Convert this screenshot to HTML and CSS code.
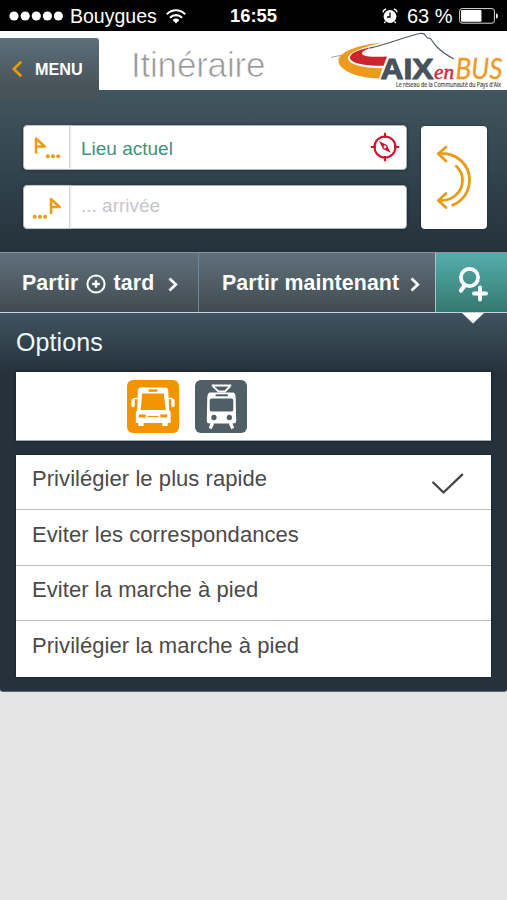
FILE: index.html
```html
<!DOCTYPE html>
<html lang="fr">
<head>
<meta charset="utf-8">
<meta name="viewport" content="width=device-width">
<title>Itinéraire</title>
<link rel="stylesheet" href="styles.css">
</head>
<body>
<div class="status">
  <svg class="signal" width="55" height="10" viewBox="0 0 55 10" fill="#fff"><circle cx="5" cy="5" r="4.6"/><circle cx="16.2" cy="5" r="4.6"/><circle cx="27.3" cy="5" r="4.6"/><circle cx="38.4" cy="5" r="4.6"/><circle cx="49.4" cy="5" r="4.6"/></svg>
  <span class="carrier">Bouygues</span>
  <svg class="wifi" width="20" height="15" viewBox="0 0 20 15"><g fill="none" stroke="#fff" stroke-width="2.2"><path d="M.8 5.2C6-.1 14-.1 19.200 5.200"/><path d="M4 8.700C7.500 5.300 12.500 5.300 16 8.700"/></g><path d="M6.600 11Q10 8.200 13.400 11L10 14.600Z" fill="#fff"/></svg>
  <span class="clock">16:55</span>
  <svg class="alarm" width="16" height="16" viewBox="0 0 16 16"><circle cx="8" cy="8.500" r="6.400" fill="#fff"/><path d="M8 4.500V9H5" fill="none" stroke="#000" stroke-width="1.300"/><path d="M.8 4.300Q1.500 1.700 4 1M15.200 4.300Q14.500 1.700 12 1M3.500 13.500L2.300 15M12.500 13.500L13.700 15" fill="none" stroke="#fff" stroke-width="1.300"/></svg>
  <span class="percent">63 %</span>
  <svg class="battery" width="39" height="16" viewBox="0 0 39 16"><rect x=".6" y=".6" width="34.800" height="14.600" rx="2.500" fill="none" stroke="#ddd" stroke-width="1"/><rect x="2" y="2" width="20.500" height="11.800" rx="1" fill="#fff"/><path d="M37 5.200Q39 5.700 39 8T37 10.800Z" fill="#fff"/></svg>
</div>

<header class="header">
  <div class="menu">
    <svg width="12" height="18" viewBox="0 0 12 18"><path d="M10.300 1.700L2.800 9L10.300 16.300" fill="none" stroke="#ee9908" stroke-width="2.700"/></svg>
    <span>MENU</span>
  </div>
  <h1 class="title">Itinéraire</h1>
  <svg class="logo" width="182" height="59" viewBox="325 31 182 59">
    <path d="M331 57.500Q336 56 342 55.400" fill="none" stroke="#888" stroke-width=".8"/>
    <path d="M383 42.500C360 44.500 340 51 338.500 60C338 70 356 78 379 78.500L382.500 68.300C362 68.300 347 64 348 57.500C350 51 366 46.500 383 42.500Z" fill="#ee9a1f"/>
    <path d="M375 46.500C361 49 349 52.500 350 58.500C352 63.500 366 66 383.500 65.800L387 56.500C376 57.300 363.500 57 362 53.800C361.500 51 367 49 375 46.500Z" fill="#ce242b"/>
    <path d="M370 48.200C389 43.500 408 36 420 33.500Q424 32.700 425.500 35.500L427.500 38L430.500 38.500C433 42 434 44 437 47C442 52 448 56 454 59" fill="none" stroke="#505b62" stroke-width="1.200"/>
    <text class="logo-aix" x="380.500" y="78.600" textLength="53" lengthAdjust="spacingAndGlyphs">AIX</text>
    <text class="logo-en" x="434" y="78.500" textLength="20" lengthAdjust="spacingAndGlyphs">en</text>
    <text class="logo-bus" x="455.500" y="78.500" textLength="47" lengthAdjust="spacingAndGlyphs">BUS</text>
    <text class="logo-tag" x="396" y="87.300" textLength="105" lengthAdjust="spacingAndGlyphs">Le réseau de la Communauté du Pays d'Aix</text>
  </svg>
</header>

<section class="search">
  <div class="fields">
    <div class="field">
      <div class="flag"><svg width="46" height="44" viewBox="0 0 46 44"><path d="M12 26.500V12.500L20.700 20.500H12" fill="none" stroke="#ee9c0c" stroke-width="2.500" stroke-linejoin="round" stroke-linecap="round"/><g fill="#ee9c0c"><circle cx="23.800" cy="30.300" r="2"/><circle cx="29" cy="30.300" r="2"/><circle cx="34.200" cy="30.300" r="2"/></g></svg></div>
      <span class="value">Lieu actuel</span>
      <svg class="compass" width="30" height="30" viewBox="0 0 30 30"><g fill="none" stroke="#d0142c" stroke-width="2.100"><circle cx="15" cy="15" r="10.500"/><path d="M15 .8V6M15 24V29.200M.8 15H6M24 15H29.200"/></g><path d="M9 9L16.900 12.900L20.700 20.700L12.900 16.900Z" fill="#d0142c"/><circle cx="15" cy="15" r="1.400" fill="#fff"/></svg>
    </div>
    <div class="field">
      <div class="flag"><svg width="46" height="44" viewBox="0 0 46 44"><path d="M27 27V13L35.700 21H27" fill="none" stroke="#ee9c0c" stroke-width="2.500" stroke-linejoin="round" stroke-linecap="round"/><g fill="#ee9c0c"><circle cx="10.700" cy="30.700" r="2"/><circle cx="15.900" cy="30.700" r="2"/><circle cx="21.100" cy="30.700" r="2"/></g></svg></div>
      <span class="value empty">... arrivée</span>
    </div>
  </div>
  <div class="swap"><svg width="66" height="103" viewBox="0 0 66 103" fill="none" stroke="#e89b18" stroke-width="2.800" stroke-linecap="round" stroke-linejoin="round"><path d="M25 21L17.300 27.800L25 35M17.500 27.500C35.500 26 48.500 38.500 48.500 54C48.500 65 42.500 74.500 31.800 79.100M25 67.500L17.300 74.500L25 81.500M17.500 74.500C30.500 75.500 41.500 67 41.500 54C41.500 48 39.300 44 35.300 40.300"/></svg></div>
</section>

<nav class="bar">
  <div class="later"><span>Partir</span>
    <svg class="plus" width="20" height="20" viewBox="0 0 20 20" fill="none" stroke="#fff"><circle cx="10" cy="10" r="8.600" stroke-width="2"/><path d="M10 6.200V13.800M6.200 10H13.800" stroke-width="2.400"/></svg>
    <span>tard</span>
    <svg class="chev" width="10" height="15" viewBox="0 0 10 15"><path d="M1.500 1.500L7.800 7.500L1.500 13.500" fill="none" stroke="#fff" stroke-width="2.700"/></svg>
  </div>
  <div class="now"><span>Partir maintenant</span>
    <svg class="chev" width="10" height="15" viewBox="0 0 10 15"><path d="M1.500 1.500L7.800 7.500L1.500 13.500" fill="none" stroke="#fff" stroke-width="2.700"/></svg>
  </div>
  <div class="more"><svg width="70" height="59" viewBox="0 0 70 59" fill="none" stroke="#fff" stroke-linecap="round"><circle cx="33.500" cy="24.500" r="8.600" stroke-width="3.700"/><path d="M29 32L25 37.500" stroke-width="4.200"/><path d="M44 34.500V46.500M38 40.500H50" stroke-width="4"/></svg></div>
</nav>

<section class="options">
  <svg class="pointer" width="22" height="11" viewBox="0 0 22 11"><path d="M0 0H22L11 10.500Z" fill="#fff"/></svg>
  <h2>Options</h2>
  <div class="modes">
    <svg width="52" height="53" viewBox="0 0 53 53" preserveAspectRatio="none">
      <rect width="53" height="53" rx="6" fill="#f19400"/>
      <path d="M13.500 7.500H39.500Q41.500 7.500 42 10L43 30L44.500 32V43H41.500V46H36V43H17V46H11.500V43H9V32L10.500 30L11 10Q11.500 7.500 13.500 7.500Z" fill="#fff"/>
      <path d="M15.500 13.500H37.500L39.500 30H14Z" fill="#f19400"/>
      <path d="M22 10.600H31" stroke="#f19400" stroke-width="2.400"/>
      <path d="M12 36H19M34 36H41" stroke="#f19400" stroke-width="2.800"/><path d="M21 36.500H32" stroke="#f19400" stroke-width="1.200"/>
      <path d="M11 18.500H8Q6 18.500 6 22M42 18.500H45Q47 18.500 47 22" fill="none" stroke="#fff" stroke-width="1.400"/>
      <path d="M6.200 20.500V25.500M46.800 20.500V25.500" stroke="#fff" stroke-width="3.500" stroke-linecap="round"/>
    </svg>
    <svg width="52" height="53" viewBox="0 0 53 53" preserveAspectRatio="none">
      <rect width="53" height="53" rx="6" fill="#505e66"/>
      <path d="M17 5.500H37M18.500 6.500L24 11.500H30.500L35.500 6.500" fill="none" stroke="#fff" stroke-width="1.800"/>
      <path d="M15 12.500H39Q41.300 13 41.500 18L42 41Q42 43.500 39 43.500H15Q12 43.500 12 41L12.500 18Q12.700 13 15 12.500Z" fill="#fff"/>
      <path d="M18 43L15.500 48.500M36 43L38.500 48.500" stroke="#fff" stroke-width="3.300"/>
      <path d="M21 15.300H33.500" stroke="#505e66" stroke-width="2"/><rect x="15" y="18.500" width="24" height="13" rx="2" fill="#505e66"/>
      <circle cx="19.300" cy="37.500" r="2.700" fill="#505e66"/><circle cx="35" cy="37.500" r="2.700" fill="#505e66"/>
    </svg>
  </div>
  <ul class="list">
    <li><span>Privilégier le plus rapide</span><svg width="34" height="22" viewBox="0 0 34 22"><path d="M2.200 9.500L12.500 19.500L31.200 1.700" fill="none" stroke="#444" stroke-width="2.300" stroke-linecap="round"/></svg></li>
    <li><span>Eviter les correspondances</span></li>
    <li><span>Eviter la marche à pied</span></li>
    <li><span>Privilégier la marche à pied</span></li>
  </ul>
</section>
</body>
</html>
```
FILE: styles.css
```css
* { box-sizing: border-box; }
body {
  margin: 0;
  width: 507px;
  height: 900px;
  overflow: hidden;
  background: #e4e4e4;
  font-family: "Liberation Sans", Arial, sans-serif;
}
svg { display: block; flex: none; }
span { white-space: nowrap; }

.status {
  display: flex;
  align-items: center;
  height: 31px;
  padding: 1px 8px 0 9px;
  background: #000;
  color: #fff;
}
.carrier { margin-left: 6px; width: 89px; font-size: 19.500px; }
.wifi { margin-left: 7px; }
.clock { margin-left: 44px; width: 47px; font-size: 18.400px; font-weight: bold; }
.alarm { margin-left: 105px; }
.percent { margin-left: 9px; width: 48px; font-size: 20px; }
.battery { margin-left: 4px; }

.header {
  display: flex;
  height: 59px;
  background: #fff;
}
.menu {
  display: flex;
  align-items: center;
  gap: 12px;
  width: 99px;
  height: 64px;
  margin-top: 7px;
  padding-left: 11px;
  padding-bottom: 2px;
  flex: none;
  border-radius: 0 3px 0 0;
  background: linear-gradient(#5c6f7b, #485257 80%, #43535c);
  color: #fff;
  font-size: 16.200px;
  font-weight: bold;
}
.title {
  margin: 0 0 0 32px;
  width: 194px;
  font-size: 35px;
  font-weight: normal;
  line-height: 67px;
  letter-spacing: -.2px;
  color: #989898;
  -webkit-text-stroke: .7px #fff;
}
.logo { overflow: visible; }
.logo-aix { font: bold 30px "Liberation Sans", sans-serif; fill: #46535c; stroke: #46535c; stroke-width: 1px; }
.logo-en { font: italic 22px "Liberation Serif", serif; fill: #d02a38; stroke: #d02a38; stroke-width: .5px; }
.logo-bus { font: italic 28px Lato, sans-serif; fill: #ee9a28; stroke: #ee9a28; stroke-width: .3px; }
.logo-tag { font: 6.400px "Open Sans", sans-serif; fill: #444; stroke: #444; stroke-width: .15px; }

.search {
  display: flex;
  gap: 14px;
  height: 162px;
  padding: 35px 20px 0 23px;
  background: linear-gradient(#415560, #24323b);
}
.fields { display: flex; flex-direction: column; gap: 15px; width: 384px; }
.field {
  display: flex;
  align-items: center;
  height: 44.500px;
  border-radius: 4px;
  background: #fff;
  border: 1px solid #a9b4b8;
  box-shadow: 0 0 3px #17242b;
}
.flag {
  width: 46px;
  height: 42px;
  overflow: hidden;
  border-right: 1px solid #d5d5d8;
  box-shadow: 1px 0 2px #e8e8e8;
}
.value { flex: 1; padding: 4px 0 0 11px; font-size: 19px; color: #43917f; }
.empty { padding: 0 0 1px 11px; color: #c5c5ca; }
.compass { margin-right: 6px; }
.swap {
  width: 66px;
  height: 103px;
  margin-top: 1px;
  border-radius: 4px;
  background: #fff;
  box-shadow: 0 0 2px #17242b;
}

.bar {
  display: flex;
  height: 61px;
  border-top: 1px solid #879397;
  border-bottom: 1px solid #c5d4da;
  background: linear-gradient(#60717b, #414a50);
  color: #fff;
  font-size: 21.300px;
  font-weight: bold;
}
.later, .now { display: flex; align-items: center; }
.later span, .now span { padding-top: 1px; }
.later { width: 199px; padding-left: 22px; letter-spacing: .15px; border-right: 1px solid #66899e; }
.plus { margin: 3px 8px 0 7px; }
.later .chev { margin: 3px 0 0 14px; }
.now { width: 237px; padding-left: 23px; letter-spacing: .12px; border-right: 1px solid #a5c5c8; }
.now .chev { margin: 3px 0 0 11px; }
.more { flex: 1; background: linear-gradient(#55aeac, #357870); }

.options {
  position: relative;
  height: 379px;
  padding: 0 16px;
  border-radius: 0 0 3px 3px;
  border-bottom: 1px solid #566973;
  background: linear-gradient(#405360, #25323b 60px);
}
.pointer { position: absolute; left: 462px; top: 0; }
.options h2 {
  margin: 0;
  height: 59px;
  font-size: 25px;
  font-weight: normal;
  line-height: 58px;
  letter-spacing: .1px;
  color: #f0f8fa;
}
.modes {
  display: flex;
  gap: 16px;
  height: 69px;
  padding: 8px 0 0 111px;
  background: #fff;
  border-bottom: 1px solid #a0abb0;
  box-shadow: 0 0 3px #111c22;
}
.list {
  margin: 14px 0 0;
  padding: 0;
  list-style: none;
  background: #fff;
  box-shadow: 0 0 2px #111c22;
}
.list li {
  display: flex;
  align-items: center;
  justify-content: space-between;
  height: 55.400px;
  padding: 0 26px 0 16px;
  border-bottom: 1px solid #bdbdc0;
  font-size: 22px;
  letter-spacing: .06px;
  color: #4b4a49;
}
.list li:last-child { border-bottom: 0; }
.list li span { padding-bottom: 6px; }
.list li svg { margin-top: 3px; }
```
